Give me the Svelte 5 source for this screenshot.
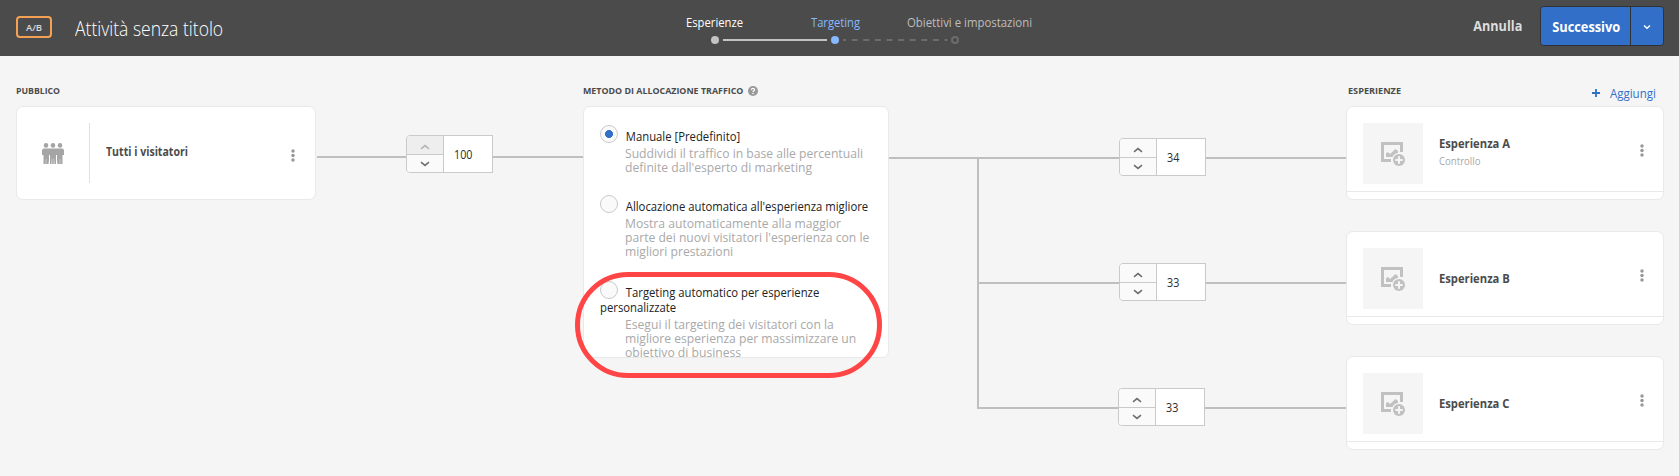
<script>
  const methods = [
    { title: 'Manuale [Predefinito]', text: ['Suddividi il traffico in base alle percentuali', "definite dall'esperto di marketing"], checked: true },
    { title: "Allocazione automatica all'esperienza migliore", text: ['Mostra automaticamente alla maggior', "parte dei nuovi visitatori l'esperienza con le", 'migliori prestazioni'] },
    { title: 'Targeting automatico per esperienze personalizzate', text: ['Esegui il targeting dei visitatori con la', 'migliore esperienza per massimizzare un', 'obiettivo di business'] }
  ];
  const experiences = [
    { name: 'Esperienza A', note: 'Controllo', share: 34 },
    { name: 'Esperienza B', share: 33 },
    { name: 'Esperienza C', share: 33 }
  ];
</script>

{#snippet stepper(value, full)}
  <div class="stepper">
    <div class="arrows">
      <button class:disabled={full} aria-label="+"><svg width="10" height="6" viewBox="0 0 10 6"><path d="M1 4.8 5 1.6 9 4.8" /></svg></button>
      <button aria-label="-"><svg width="10" height="6" viewBox="0 0 10 6"><path d="M1 1.2 5 4.4 9 1.2" /></svg></button>
    </div>
    <div class="value"><span>{value}</span></div>
  </div>
{/snippet}

{#snippet dots()}
  <svg class="dots" width="4" height="13" viewBox="0 0 4 13"><circle cx="2" cy="2" r="1.75" /><circle cx="2" cy="6.5" r="1.75" /><circle cx="2" cy="11" r="1.75" /></svg>
{/snippet}

<header>
  <span class="badge">A/B</span>
  <h1>Attività senza titolo</h1>
  <nav>
    <div class="labels">
      <span class="done">Esperienze</span>
      <span class="current">Targeting</span>
      <span class="next">Obiettivi e impostazioni</span>
    </div>
    <svg width="250" height="8" viewBox="0 0 250 8">
      <circle cx="5" cy="4" r="4" fill="#c3c3c3" />
      <path d="M13 4H117" stroke="#c3c3c3" stroke-width="2" />
      <circle cx="125" cy="4" r="4" fill="#86b9ff" />
      <path d="M133 4h3m5.700 0h6m5.600 0h6m5.600 0h6m5.600 0h6m5.600 0h6m5.600 0h6m5.600 0h6m5.600 0h6m5.600 0h3" stroke="#6c6c6c" stroke-width="2" />
      <circle cx="245" cy="4" r="3" fill="none" stroke="#6c6c6c" stroke-width="2" />
    </svg>
  </nav>
  <div class="actions">
    <span class="cancel">Annulla</span>
    <div class="split">
      <button class="go"><span>Successivo</span></button>
      <button class="more" aria-label="Successivo"><svg width="8" height="6" viewBox="0 0 8 6"><path d="M1 1.500 4 4.300 7 1.500" /></svg></button>
    </div>
  </div>
</header>

<main>
  <section class="audience">
    <h2><span>Pubblico</span></h2>
    <div class="card">
      <div class="people">
        <svg width="22" height="21" viewBox="0 0 22 21">
          <g fill="#a5a5a5">
            <circle cx="4" cy="2.400" r="2.300" /><circle cx="11" cy="2.400" r="2.300" /><circle cx="18" cy="2.400" r="2.300" />
            <path d="M2 5.500H20Q22 5.500 22 7.500V12H20.500V21H15.500L15 17 14.500 21H13V13.500L12.500 21H9.500L9 13.500V21H7.500L7 17 6.500 21H1.500V12H0V7.500Q0 5.500 2 5.500Z" />
          </g>
          <path d="M7.500 12V21M14.500 12V21" stroke="#fff" stroke-width="1" />
          <path d="M4 16V21M11 16V21M18 16V21" stroke="#fff" stroke-width=".4" />
        </svg>
      </div>
      <strong>Tutti i visitatori</strong>
      {@render dots()}
    </div>
  </section>

  <section class="link">
    <i></i>{@render stepper(100, true)}<i></i>
  </section>

  <section class="method">
    <h2><span>Metodo di allocazione traffico</span>
      <svg width="10" height="10" viewBox="0 0 10 10"><circle cx="5" cy="5" r="5" fill="#999" /><path d="M3.400 3.900Q3.500 2.400 5 2.400T6.600 3.700Q6.600 4.500 5.700 4.900 5 5.200 5 6" fill="none" stroke="#fff" stroke-width="1.200" /><circle cx="5" cy="7.600" r=".75" fill="#fff" /></svg>
    </h2>
    <div class="card">
      {#each methods as m}
        <div class="option">
          <span class="radio" class:checked={m.checked}></span>
          <div class="title">{m.title}</div>
          <p>{#each m.text as line}<span>{line}</span>{/each}</p>
        </div>
      {/each}
    </div>
    <div class="highlight"></div>
  </section>

  <section class="branches">
    <i class="lead"></i>
    <div class="tree">
      {#each experiences as e}
        <div class="branch"><i></i>{@render stepper(e.share)}<i></i></div>
      {/each}
    </div>
  </section>

  <section class="experiences">
    <div class="head">
      <h2><span>Esperienze</span></h2>
      <a href="#add"><svg width="8" height="8" viewBox="0 0 8 8"><path d="M4 0V8M0 4H8" stroke="#326fc9" stroke-width="1.800" /></svg><span>Aggiungi</span></a>
    </div>
    {#each experiences as e}
      <div class="card">
        <div class="row">
          <div class="thumb">
            <svg width="24" height="24" viewBox="0 0 24 24">
              <path d="M10 18.500H1.500V1.500H20.500V10" fill="none" stroke="#c1c1c1" stroke-width="3" />
              <path d="M5 15V11.500Q7 9 9 12L14.500 7 17 9V11Q12.500 12 11.500 15Z" fill="#c1c1c1" />
              <circle cx="18" cy="18" r="7" fill="#f5f5f5" />
              <circle cx="18" cy="18" r="6" fill="#c1c1c1" />
              <path d="M18 14.300V21.700M14.300 18H21.700" stroke="#f5f5f5" stroke-width="2" />
            </svg>
          </div>
          <div class="name"><strong>{e.name}</strong>{#if e.note}<small>{e.note}</small>{/if}</div>
          {@render dots()}
        </div>
      </div>
    {/each}
  </section>
</main>

<style>
  :global(body) { background: #f5f5f5; }
  header, main { font-family: 'Open Sans', sans-serif; font-size: 12.5px; color: #4b4b4b; box-sizing: border-box; width: 1679px; }
  header *, main * { box-sizing: border-box; }
  button { font: inherit; padding: 0; border: 0; margin: 0; }
  svg { display: block; flex: none; }
  h1, h2, p { margin: 0; }

  /* The interface face is narrower than Open Sans, so labels are condensed sideways. */
  h1, h2 span, strong, small, p span, .title, .labels span, .value span { transform-origin: left center; }

  header { height: 56px; background: #4b4b4b; display: flex; align-items: flex-start; padding: 0 15px 0 16px; }
  .badge { width: 36px; height: 22px; margin-top: 16px; border: 2px solid #f5a155; border-radius: 4px; color: #dadada; font-size: 9.5px; font-weight: 600; line-height: 19px; text-align: center; }
  h1 { margin: 15px 442px 0 23px; width: 169px; font-size: 20px; line-height: 28px; font-weight: 300; transform: scaleX(.876); color: #fff; white-space: nowrap; }
  nav { width: 350px; margin-top: 14px; }
  .labels { display: flex; height: 17px; line-height: 17px; white-space: nowrap; }
  .done { width: 57px; color: #fff; font-weight: 500; margin-right: 68px; transform: scaleX(.9); }
  .current { width: 49px; color: #86b9ff; margin-right: 47px; transform: scaleX(.894); }
  .next { color: #bdbdbd; transform: scaleX(.912); }
  nav svg { margin: 5px 0 0 24px; }
  .actions { margin-left: auto; display: flex; padding-top: 6px; }
  .cancel { font-size: 14px; font-weight: 700; transform: scaleX(.903); transform-origin: right center; color: #dedede; line-height: 40px; margin-right: 18px; }
  .split { display: flex; width: 124px; height: 40px; border: 1px solid #303235; border-radius: 4px; overflow: hidden; }
  .go { width: 90px; background: #326fc9; color: #fff; font-size: 14px; font-weight: 700; border-right: 1px solid #303235; padding: 1px 0 0 1px; }
  .go span { display: inline-block; transform: scaleX(.914); }
  .more { flex: 1; display: grid; place-items: center; background: #326fc9; padding-top: 2px; }
  .more path { fill: none; stroke: #fff; stroke-width: 1.4; }

  main { height: 420px; display: grid; grid-template-columns: 301px 266px 306px 457px 318px; padding-left: 16px; }
  h2 { display: flex; align-items: center; height: 14px; margin: 28px 0 8px; font-size: 9.5px; line-height: 14px; font-weight: 700; text-transform: uppercase; white-space: nowrap; }
  h2 span { display: block; transform: scaleX(.934); }
  .audience h2 span { transform: scaleX(.917); }
  .method h2 svg { margin-left: -7px; }
  strong { font-weight: 700; transform: scaleX(.898); }
  .card { background: #fff; border: 1px solid #e9e9e9; border-radius: 7px; height: 94px; }
  .dots { margin-left: auto; fill: #989898; }

  .audience .card { width: 300px; display: flex; align-items: center; padding-right: 20px; }
  .people { width: 73px; height: 60px; border-right: 1px solid #e1e1e1; display: grid; place-items: center; }
  .audience strong { margin: -4px 0 0 16px; transform: scaleX(.845); }
  .audience .dots { margin-top: 4px; }

  .link { display: flex; height: 38px; margin-top: 79px; }
  .link i, .branch i { flex: 1; height: 2px; background: #bfbfbf; margin-top: 21px; }
  .link i:first-child { flex: 0 0 89px; }
  .stepper { display: flex; width: 87px; height: 38px; flex: none; }
  .arrows { width: 38px; border: 1px solid #cacaca; border-radius: 4px 0 0 4px; overflow: hidden; }
  .arrows button { display: grid; place-items: center; width: 100%; height: 18px; background: #fafafa; }
  .arrows button:first-child { height: 19px; border-bottom: 1px solid #cacaca; padding-top: 3px; }
  .arrows .disabled { background: #eee; }
  .arrows path { fill: none; stroke: #6e6e6e; stroke-width: 1.6; }
  .arrows .disabled path { stroke: #b5b5b5; }
  .value { flex: 1; margin-left: -1px; border: 1px solid #cacaca; background: #fff; padding-left: 10px; color: #2c2c2c; line-height: 37px; }
  .value span { display: inline-block; transform: scaleX(.86); }

  .method { position: relative; }
  .method .card { height: 252px; overflow: hidden; padding: 22px 16px 0; }
  .option { display: grid; grid-template-columns: 272px; margin-bottom: 27px; white-space: nowrap; color: #222; }
  .option:first-child { margin-bottom: 25px; }
  .radio { grid-area: 1 / 1; width: 18px; height: 18px; margin: -4px 0 -8px; border: 1px solid #cacaca; border-radius: 50%; background: #fafafa; }
  .checked { background: radial-gradient(circle, #326fc9 0 3.700px, #fafafa 4.300px); }
  .title { grid-area: 1 / 1; line-height: 15px; white-space: normal; width: 305px; text-indent: 28.5px; margin-bottom: 2px; transform: scaleX(.904); }
  p { padding-left: 25px; font-size: 13px; line-height: 14px; color: #a9a9a9; }
  p span { display: block; width: max-content; transform: scaleX(.934); }
  .highlight { position: absolute; left: -8px; top: 216px; width: 307px; height: 106px; border: 5px solid #ff4545; border-radius: 53px; }

  .branches { display: flex; padding-top: 82px; }
  .lead { width: 88px; height: 2px; margin-top: 19px; background: #bfbfbf; }
  .tree { flex: 1; display: flex; flex-direction: column; gap: 87px; height: 271px; background: linear-gradient(#bfbfbf, #bfbfbf) 0 19px / 2px 252px no-repeat; }
  .branch { display: flex; height: 38px; flex: none; }
  .branch i { margin-top: 19px; }
  .branch i:first-child { flex: 0 0 142px; }
  .branch:last-child i:first-child { flex-basis: 141px; }

  .head { display: flex; justify-content: space-between; padding: 0 8px 0 2px; }
  .head h2 span { transform: scaleX(.962); }
  .head a { display: flex; align-items: center; gap: 4px; height: 18px; margin-top: 28px; font-size: 13px; color: #326fc9; text-decoration: none; }
  .head a span { transform: scaleX(.886); transform-origin: right center; }
  .experiences .card { margin-bottom: 31px; }
  .row { display: flex; align-items: center; height: 85px; padding: 5px 19px 0 16px; border-bottom: 1px solid #e9e9e9; }
  .thumb { width: 60px; height: 61px; margin-top: 4px; background: #f5f5f5; display: grid; place-items: center; }
  .name { margin: 2px 0 0 16px; }
  .name strong, .name small { display: block; line-height: 17px; }
  .name strong { margin-top: 1px; }
  .name small { font-size: 11px; transform: scaleX(.874); color: #a8a8a8; margin-bottom: 2px; }
  .row .dots { margin-top: -3px; }
</style>
